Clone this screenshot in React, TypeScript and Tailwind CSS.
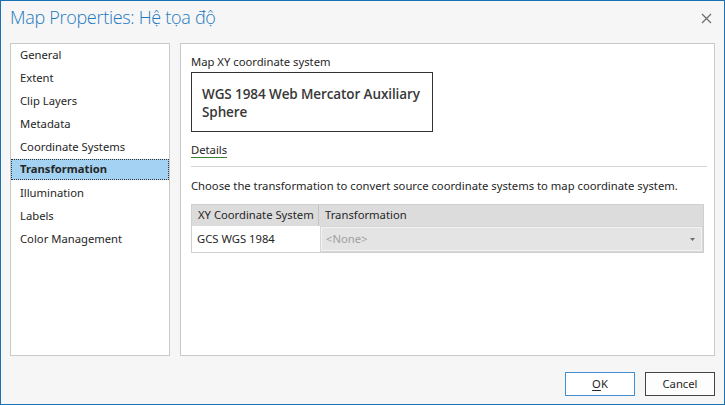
import React from 'react'

const sections = [
  'General',
  'Extent',
  'Clip Layers',
  'Metadata',
  'Coordinate Systems',
  'Transformation',
  'Illumination',
  'Labels',
  'Color Management',
]

function CloseIcon() {
  return (
    <svg width="11" height="11" viewBox="0 0 11 11" className="block">
      <path d="M1 1 L10 10 M10 1 L1 10" stroke="#6b6b6b" strokeWidth="1.2" fill="none" />
    </svg>
  )
}

export default function App() {
  const selected = 'Transformation'

  return (
    <div className="w-[725px] h-[405px] border border-[#1b72b2] bg-[#f6f6f6] flex flex-col font-['Noto_Sans','Open_Sans',sans-serif] text-[11.25px] text-[#262626] overflow-hidden">
      {/* title bar */}
      <div className="h-[42px] flex items-start justify-between pl-[9px] pr-[12px] pt-[3px]">
        <div className="font-['Open_Sans','Noto_Sans',sans-serif] font-light text-[18px] tracking-[-0.3px] leading-[27px] text-[#1c79c0]">
          Map Properties: Hệ tọa độ
        </div>
        <div className="pt-[9px]">
          <CloseIcon />
        </div>
      </div>

      {/* body */}
      <div className="flex gap-[10px] px-[9px] h-[313px]">
        <div className="w-[160px] border border-[#c9c9c9] bg-white">
          {sections.map((s) => (
            <div key={s} className="h-[23px]">
              <div
                className={
                  s === selected
                    ? 'h-[21px] flex items-center pl-[8px] bg-[#a3d2f2] border border-dotted border-[#333] font-bold'
                    : 'h-[21px] flex items-center pl-[9px] pt-px'
                }
              >
                {s}
              </div>
            </div>
          ))}
        </div>

        <div className="flex-1 border border-[#c9c9c9] bg-white pl-[10px] pr-[9px] pt-[10px]">
          <div className="leading-[16px]">Map XY coordinate system</div>
          <div className="mt-[2px] w-[242px] h-[60px] border border-[#333] pl-[10px] pt-[12px] font-['Open_Sans','Noto_Sans',sans-serif] font-semibold text-[13.5px] tracking-[-0.1px] leading-[18px] text-[#383838]">
            WGS 1984 Web Mercator Auxiliary
            <br />
            Sphere
          </div>
          <div className="mt-[10px] leading-[16px]">
            <span className="underline decoration-[#3f7f36] underline-offset-[3px]">Details</span>
          </div>
          <div className="mt-[8px] h-px bg-[#d4d4d4] mr-[-2px]" />
          <div className="mt-[11px] leading-[16px]">
            Choose the transformation to convert source coordinate systems to map coordinate system.
          </div>

          <div className="mt-[10px] border border-[#cfcfcf] mr-px">
            <div className="flex h-[21px] bg-[#dcdcdc] items-center">
              <div className="w-[127px] h-full flex items-center pl-[6px] border-r border-[#c4c4c4]">
                XY Coordinate System
              </div>
              <div className="flex-1 pl-[6px]">Transformation</div>
            </div>
            <div className="flex h-[26px]">
              <div className="w-[128px] flex items-center pl-[5px] bg-white">GCS WGS 1984</div>
              <div className="flex-1 p-[1px]">
                <div className="h-full bg-[#e4e4e4] border border-[#f3f3f3] outline outline-1 outline-[#d6d6d6] flex items-center justify-between pl-[4px] pr-[6px] text-[#a0a0a0]">
                  <span>&lt;None&gt;</span>
                  <svg width="5" height="3" viewBox="0 0 5 3">
                    <path d="M0 0 L5 0 L2.5 3 Z" fill="#6d6d6d" />
                  </svg>
                </div>
              </div>
            </div>
          </div>
        </div>
      </div>

      {/* footer */}
      <div className="flex justify-end gap-[10px] pr-[9px] pt-[16px]">
        <button className="w-[70px] h-[24px] border border-[#3f8fd2] bg-white text-[#262626]">
          <span className="underline underline-offset-[2px]">O</span>K
        </button>
        <button className="w-[70px] h-[24px] border border-[#444] bg-[#fdfdfd] text-[#262626]">
          Cancel
        </button>
      </div>
    </div>
  )
}
